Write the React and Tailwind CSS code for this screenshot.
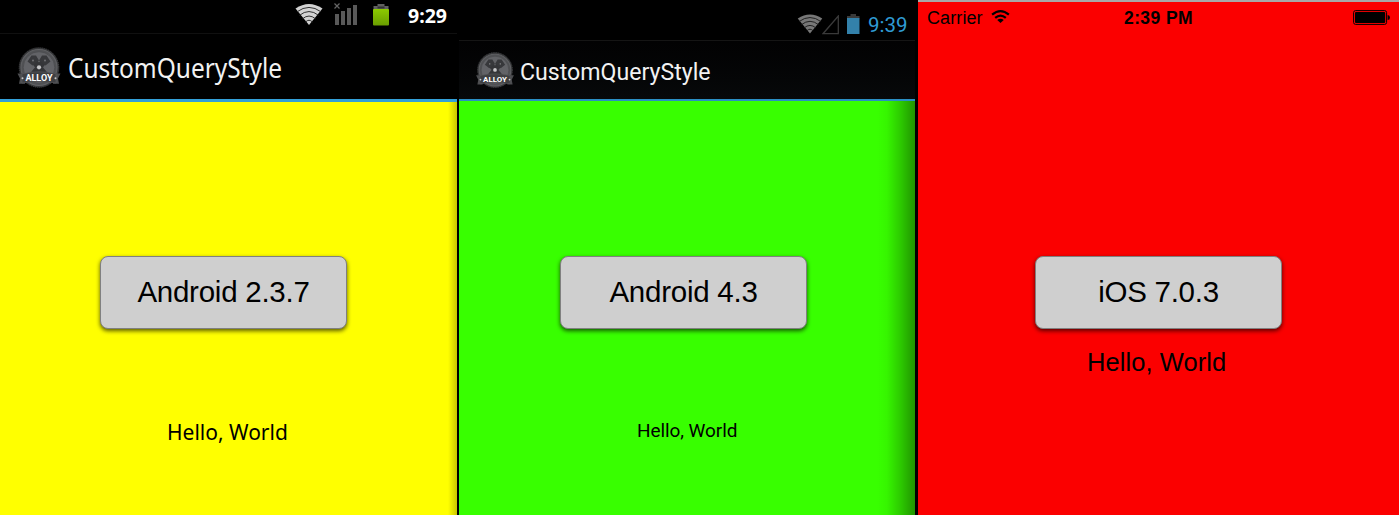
function AlloyLogo({ className }) {
  return (
    <svg viewBox="0 0 44 42" className={className}>
      <circle cx="22" cy="20.500" r="19.800" fill="#353638" stroke="#454648" strokeWidth="0.900" strokeDasharray="1.200 0.800" />
      <circle cx="22" cy="20.500" r="18" fill="#505154" stroke="#5e5f62" strokeWidth="1.200" />
      <circle cx="22" cy="20.500" r="15.800" fill="#626367" stroke="#4a4b4e" strokeWidth="0.800" />
      <path d="M16 13L30 30M28 13L14 30" stroke="#343538" strokeWidth="6" fill="none" />
      <path d="M10.500 14.500l4-6h4.500l3 5-6.500 5zM33.500 14.500l-4-6h-4.500l-3 5 6.500 5z" fill="#37383b" />
      <circle cx="16" cy="13.500" r="0.900" fill="#77787b" />
      <circle cx="28" cy="13.500" r="0.900" fill="#77787b" />
      <circle cx="22" cy="20.300" r="2.100" fill="#c4c5c7" />
      <path d="M0.500 26.500H8V36.800H2L3 31.500zM43.500 26.500H36V36.800H42L41 31.500z" fill="#4c4d50" />
      <path d="M5 26.800Q22 22.800 39 26.800V36Q22 32.800 5 36z" fill="#3e3f42" stroke="#5a5b5e" strokeWidth="0.600" />
      <circle cx="5.500" cy="31.300" r="1" fill="#c8c8c8" />
      <circle cx="38.500" cy="31.300" r="1" fill="#c8c8c8" />
      <text x="8.500" y="33.500" textLength="27" lengthAdjust="spacing" fill="#fff" fontFamily="Roboto, sans-serif" fontWeight="700" fontSize="9">
        ALLOY
      </text>
    </svg>
  );
}

function WifiFan({ className, light, dark }) {
  return (
    <svg viewBox="0 0 28 22" className={className} fill="none">
      <path d="M14 21.500L0.500 5Q14 -4 27.500 5z" fill={light} />
      <g stroke={dark} strokeWidth="1">
        <path d="M2 8.300Q14 -0.500 26 8.300" />
        <path d="M4.500 11.800Q14 4.300 23.500 11.800" />
        <path d="M7.500 15.300Q14 9.800 20.500 15.300" />
        <path d="M10.500 18.500Q14 15 17.500 18.500" />
      </g>
    </svg>
  );
}

function Button({ children, className }) {
  return (
    <button className={`h-[73px] w-[247px] shrink-0 rounded-[8px] border border-[#808080] bg-[#cfcfcf] pb-[2px] font-['Liberation_Sans',sans-serif] text-[29.5px] leading-[68px] tracking-[-0.25px] whitespace-nowrap text-black shadow-[0_2px_4px_rgba(0,0,0,0.65)] ${className}`}>
      {children}
    </button>
  );
}

function Gingerbread() {
  return (
    <section className="flex h-full w-[457px] flex-col bg-[#ffff00] font-['Noto_Sans','Open_Sans',sans-serif]">
      <div className="flex h-[34px] shrink-0 border-b border-[#101010] bg-black pl-[295px]">
        <WifiFan className="mt-[3px] h-[23px] w-[28px] shrink-0" light="#d2d2d2" dark="#303030" />
        <svg viewBox="0 0 24 24" className="mt-[2px] ml-[11px] h-[24px] w-[24px] shrink-0">
          <path d="M0.500 1.500l5 5m0-5l-5 5" stroke="#666" strokeWidth="1.200" />
          <path d="M1 12h4v11h-4zM7 9h4v14h-4zM13 6h4v17h-4zM19 3h4v20h-4z" fill="#595959" />
        </svg>
        <svg viewBox="0 0 18 24" className="mt-[3px] ml-[14px] h-[24px] w-[18px] shrink-0">
          <defs>
            <linearGradient id="charge" x2="0" y2="1">
              <stop offset="0" stopColor="#8ccb00" />
              <stop offset="1" stopColor="#6a9e00" />
            </linearGradient>
          </defs>
          <path d="M1.500 3h4V1h7v2h4v4h-15z" fill="#606060" />
          <path d="M5.500 3.500h7v2h-7z" fill="#333" />
          <rect x="1" y="6" width="16" height="16.500" rx="1" fill="url(#charge)" />
        </svg>
        <span className="ml-[18px] text-[19.5px] leading-[31px] font-bold whitespace-nowrap text-white">9:29</span>
      </div>
      <div className="flex h-[65px] shrink-0 bg-black pl-[17px]">
        <AlloyLogo className="mt-[13px] h-[42px] w-[44px] shrink-0" />
        <h1 className="ml-[7px] origin-left scale-x-[0.905] text-[27px] leading-[67px] whitespace-nowrap text-[#f2f2f2]">CustomQueryStyle</h1>
      </div>
      <div className="h-[3px] shrink-0 bg-[#33a0d8]" />
      <div className="flex grow flex-col bg-[linear-gradient(to_left,rgba(80,70,0,0.3),transparent_9px)] pt-[154px]">
        <Button className="ml-[100px]">Android 2.3.7</Button>
        <p className="mt-[88px] ml-[167px] text-[21px] leading-[30px] whitespace-nowrap text-black">Hello, World</p>
      </div>
    </section>
  );
}

function JellyBean() {
  return (
    <section className="ml-[2px] flex h-full w-[456px] flex-col bg-[#38ff00] font-['Roboto',sans-serif]">
      <div className="flex h-[41px] shrink-0 border-b border-[#151515] bg-black pl-[338px]">
        <WifiFan className="mt-[14px] h-[20px] w-[26px] shrink-0" light="#777777" dark="#181818" />
        <svg viewBox="0 0 18 20" className="mt-[15px] ml-[-1px] h-[20px] w-[18px] shrink-0" fill="none">
          <path d="M1 18.700H16.300V1z" stroke="#3a3a3a" strokeWidth="1.300" />
        </svg>
        <svg viewBox="0 0 13 20" className="mt-[14px] ml-[7px] h-[20px] w-[13px] shrink-0">
          <path d="M0 2h3.500V0h5.500v2H12.500v2.500H0z" fill="#3a3a3a" />
          <path d="M0 4h12.500v16H0z" fill="#3381aa" />
        </svg>
        <span className="ml-[8px] text-[20.5px] leading-[51px] whitespace-nowrap text-[#2f9bd3]">9:39</span>
      </div>
      <div className="flex h-[58px] shrink-0 bg-gradient-to-b from-[#020203] to-[#07090a] pl-[16px]">
        <AlloyLogo className="mt-[11px] h-[37px] w-[40px] shrink-0" />
        <h1 className="ml-[5px] origin-left scale-x-[0.984] text-[23.5px] leading-[62px] whitespace-nowrap text-[#f2f2f2]">CustomQueryStyle</h1>
      </div>
      <div className="h-[2px] shrink-0 bg-[#2a8fc4]" />
      <div className="flex grow flex-col bg-[linear-gradient(to_left,rgba(0,0,0,0.42),rgba(0,0,0,0.2)_15px,rgba(0,0,0,0.04)_28px,transparent_38px)] pt-[155px]">
        <Button className="ml-[101px]">Android 4.3</Button>
        <p className="mt-[88px] ml-[178px] text-[19px] leading-[28px] tracking-[-0.08px] whitespace-nowrap text-black">Hello, World</p>
      </div>
    </section>
  );
}

function Ios() {
  return (
    <section className="ml-[3px] flex h-full w-[481px] flex-col border-t-2 border-[#a8a8a8] bg-[#fb0000] font-['Liberation_Sans',sans-serif] text-black">
      <div className="flex h-[32px] shrink-0 pl-[9px] leading-[32px] whitespace-nowrap">
        <span className="w-[64px] text-[18px] tracking-[0.1px]">Carrier</span>
        <svg viewBox="0 0 20 15" className="mt-[8px] h-[14px] w-[19px] shrink-0" fill="none" stroke="#000" strokeWidth="2.400">
          <path d="M1 5Q10 -2.500 19 5M4.300 8.500Q10 3.500 15.700 8.500" />
          <path d="M10 14L6.500 10.700Q10 8 13.500 10.700z" fill="#000" stroke="none" />
        </svg>
        <span className="ml-[114px] w-[229px] text-[17.5px] font-bold tracking-[0.4px]">2:39 PM</span>
        <svg viewBox="0 0 38 15" className="mt-[8px] h-[15px] w-[38px] shrink-0">
          <rect x="0.600" y="0.600" width="33" height="13.800" rx="2" fill="none" stroke="#000" />
          <rect x="2" y="2" width="30.200" height="11" rx="1" fill="#000" />
          <path d="M34.600 5Q37 5 37 7.500T34.600 10z" fill="#000" />
        </svg>
      </div>
      <div className="flex grow flex-col pt-[222px]">
        <Button className="ml-[117px]">iOS 7.0.3</Button>
        <p className="mt-[18px] ml-[169px] text-[25.5px] leading-[30px] tracking-[0.08px] whitespace-nowrap">Hello, World</p>
      </div>
    </section>
  );
}

export default function App() {
  return (
    <main className="flex h-[515px] w-[1399px] overflow-hidden bg-black">
      <Gingerbread />
      <JellyBean />
      <Ios />
    </main>
  );
}
